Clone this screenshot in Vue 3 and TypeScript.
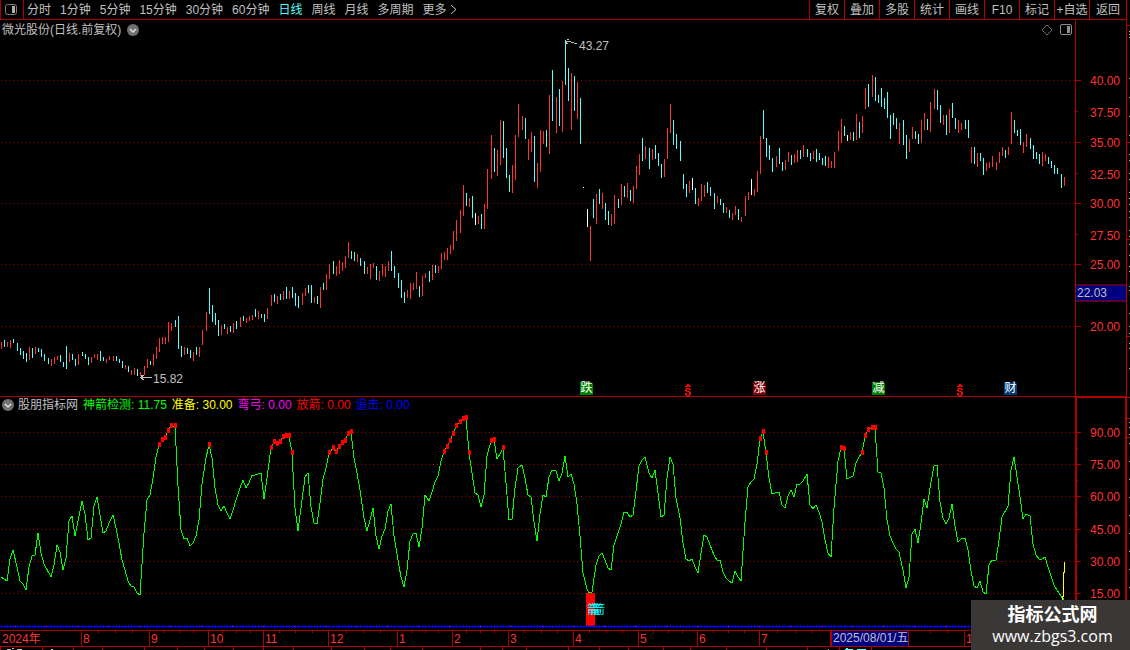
<script setup lang="ts">
type Candle = { x: number; top: number; bottom: number; kind: string }
type Point = { x: number; y: number }

const periods = ['分时', '1分钟', '5分钟', '15分钟', '30分钟', '60分钟', '日线', '周线', '月线', '多周期', '更多']
const tools = ['复权', '叠加', '多股', '统计', '画线', 'F10', '标记', '+自选', '返回']

// x top bottom kind: r = rising, c = falling, w = unchanged
const candleData = `
1 342 349 r;4 340 347 c;7 342 347 r;10 340 348 r;13 339 343 c;17 343 351 c;20 348 355 c;23 351 359 c;26 353 362 c;29 347 360 r;
32 348 358 c;35 347 354 r;38 348 352 c;41 349 357 c;44 354 361 c;48 358 364 c;51 359 366 r;54 357 364 r;57 356 360 r;60 355 362 c;
63 362 367 c;66 346 369 c;69 353 362 r;72 354 360 c;75 359 366 c;78 354 365 r;82 352 356 c;85 354 359 c;88 357 365 c;91 357 363 r;
94 354 358 r;97 354 360 r;100 351 361 c;103 357 361 c;106 359 363 r;109 356 360 r;113 356 361 r;116 356 361 c;119 359 363 c;122 361 368 c;
125 365 369 r;128 366 372 c;131 370 375 r;134 368 375 r;137 369 376 c;140 372 376 r;144 366 375 r;147 359 368 r;150 361 365 c;153 354 366 r;
156 347 359 r;159 338 352 r;162 337 344 r;165 337 344 r;168 322 342 r;171 323 331 r;175 320 327 c;178 316 349 c;181 346 357 c;184 347 355 r;
187 348 354 c;190 350 358 c;193 352 361 r;196 347 355 c;199 347 357 r;202 330 345 r;206 312 331 r;209 288 314 c;212 305 322 c;215 313 325 c;
218 320 336 c;221 325 335 r;224 324 329 c;227 327 334 r;230 326 332 c;233 323 333 r;236 321 329 c;240 317 327 r;243 316 321 c;246 318 323 r;
249 316 321 r;252 315 320 r;255 309 317 c;258 311 319 r;261 314 318 c;264 314 322 c;267 308 319 r;271 295 306 r;274 294 302 c;277 296 304 r;
280 294 300 c;283 291 300 r;286 287 299 c;289 291 299 r;292 287 298 c;295 293 306 c;298 296 308 c;302 293 305 r;305 288 296 r;308 285 293 c;
311 285 303 c;314 297 303 r;317 296 304 c;320 287 308 r;323 283 290 c;326 274 290 r;329 264 279 r;333 261 274 c;336 266 276 r;339 260 274 r;
342 262 271 r;345 256 268 r;348 242 258 r;351 251 259 c;354 252 261 c;357 254 262 r;360 258 266 c;364 261 274 c;367 267 274 r;370 264 279 r;
373 263 268 r;376 266 280 c;379 271 281 r;382 264 276 r;385 266 277 r;388 261 271 r;391 251 271 c;394 266 278 c;398 273 288 c;401 280 298 c;
404 292 303 c;407 290 298 r;410 283 299 r;413 283 290 r;416 272 289 r;419 286 297 c;422 276 296 r;425 273 278 r;429 271 282 c;432 265 280 r;
435 265 273 c;438 266 273 r;441 253 269 r;444 252 260 r;447 248 260 r;450 245 254 r;453 231 250 r;456 220 241 r;460 210 233 r;463 185 216 r;
466 193 206 c;469 198 207 r;472 196 218 c;475 213 225 w;478 216 224 r;481 214 229 c;484 204 229 r;487 169 209 r;491 135 179 r;494 148 172 c;
497 150 176 r;500 120 165 r;503 121 158 c;506 148 178 c;509 175 192 c;512 165 193 r;515 135 180 r;518 104 137 r;522 116 130 r;525 118 139 c;
528 139 160 r;531 132 152 r;534 136 182 c;537 163 188 r;540 130 172 r;543 131 144 r;546 130 147 c;549 95 154 r;552 70 121 c;556 97 133 r;
559 89 126 c;562 81 132 r;565 40 85 c;568 68 101 c;571 73 130 r;574 76 111 c;577 82 119 r;580 98 144 c;583 187 188 w;587 209 227 w;
590 226 261 r;593 199 218 c;596 194 224 r;599 189 204 c;602 193 209 r;605 203 220 c;608 211 225 c;611 214 226 r;614 195 224 r;618 199 208 c;
621 184 205 r;624 186 197 c;627 183 198 r;630 190 201 c;633 186 203 r;636 166 189 r;639 154 175 r;642 138 161 c;645 146 159 r;649 148 169 c;
652 149 160 r;655 145 159 c;658 153 166 c;661 164 178 c;664 159 177 r;667 128 159 r;670 104 133 r;673 120 145 c;676 134 149 c;680 141 161 c;
683 174 189 c;686 184 197 c;689 181 193 r;692 178 190 w;695 188 204 c;698 198 206 r;701 184 201 r;704 185 197 r;707 182 193 c;710 187 196 c;
714 193 209 c;717 196 203 r;720 199 205 c;723 203 213 c;726 207 213 r;729 210 218 c;732 213 220 r;735 206 215 r;738 209 220 c;741 217 222 r;
745 196 216 r;748 192 200 r;751 179 195 w;754 189 196 r;757 171 192 r;760 136 174 r;763 110 139 c;766 138 157 c;769 145 160 c;772 158 172 c;
776 156 167 r;779 148 164 c;782 162 171 c;785 160 170 r;788 152 162 r;791 155 165 c;794 154 163 r;797 150 162 r;800 150 159 c;803 145 157 r;
807 149 157 c;810 153 161 c;813 151 159 r;816 149 162 c;819 153 160 c;822 158 165 c;825 156 166 c;828 157 168 r;831 161 168 r;834 152 168 r;
838 131 151 r;841 119 143 r;844 126 136 c;847 135 141 w;850 132 140 r;853 132 141 c;856 114 140 r;859 122 138 c;862 116 133 r;865 88 109 r;
868 84 107 c;872 75 97 r;875 77 101 c;878 95 103 c;881 88 107 c;884 98 109 c;887 92 118 c;890 115 139 c;893 113 125 c;896 118 129 c;
899 123 144 r;903 120 145 c;906 135 159 c;909 139 152 r;912 127 139 r;915 131 139 c;918 134 144 c;921 120 143 r;924 113 130 r;927 119 130 c;
930 102 132 r;934 89 109 r;937 90 110 c;940 105 123 c;943 115 125 r;946 115 135 c;949 109 133 r;952 103 118 c;955 118 129 c;958 120 133 r;
961 123 130 r;965 120 129 c;968 120 138 c;971 147 163 r;974 147 164 c;977 153 167 r;980 153 161 c;983 158 175 c;986 163 171 r;989 162 168 r;
992 156 167 r;996 162 170 r;999 152 163 r;1002 147 156 r;1005 150 158 c;1008 147 155 r;1011 112 144 r;1014 120 133 c;1017 130 136 c;1020 129 145 c;
1023 142 153 r;1026 134 147 r;1030 138 149 c;1033 145 159 c;1036 152 159 c;1039 154 164 c;1042 152 166 r;1045 154 161 r;1048 157 164 c;1051 161 168 c;
1054 165 174 c;1057 168 174 c;1061 174 188 c;1064 177 186 r`

const candles: Candle[] = candleData.trim().split(';').map((row) => {
  const [x, top, bottom, kind] = row.trim().split(' ')
  return { x: Number(x), top: Number(top), bottom: Number(bottom), kind }
})

const signalData = `
1,577 7,581 10,559 13,550 17,567 20,581 23,584 26,590 29,567 32,556 35,555 38,533 41,553 44,564 51,577 54,565 57,545 60,552 63,570 66,558
69,521 72,516 75,536 78,521 82,501 85,514 88,540 91,538 94,506 97,497 100,515 103,533 106,531 109,523 113,515 116,528 119,543 122,560 125,570 128,581
131,586 134,587 137,593 140,595 144,533 147,500 150,495 153,478 156,457 159,445 162,440 165,438 168,431 171,426 175,426 178,486 181,530 184,539 187,538 190,546
193,543 196,536 199,520 202,484 206,458 209,445 212,458 215,488 218,505 221,511 224,506 227,513 230,519 233,510 236,500 240,488 243,480 246,488 249,483 252,475
255,475 261,473 264,499 267,478 271,448 274,442 277,444 280,442 283,437 286,436 289,436 292,453 295,508 298,531 302,500 305,477 308,473 311,507 314,523 317,524
320,503 323,479 326,468 329,453 333,448 336,452 339,447 342,443 345,441 348,434 351,432 354,458 357,473 360,490 364,518 367,531 370,520 373,508 376,536 379,549
382,536 385,529 388,511 391,504 394,536 398,560 401,577 404,587 407,570 410,541 413,534 416,533 419,547 422,528 425,495 429,501 432,492 435,482 438,476 441,461
444,452 447,447 450,441 453,434 456,426 460,422 463,419 466,418 469,453 472,473 475,493 478,495 481,507 484,495 487,456 491,441 494,440 497,459 500,454 503,448
506,483 509,520 512,519 515,488 518,468 522,465 525,478 528,495 531,497 534,522 537,541 540,514 543,495 546,497 549,477 552,470 556,471 559,481 562,473 565,456
568,477 571,474 574,484 577,504 580,536 583,573 587,589 589,593 592,592 593,585 596,565 599,556 602,553 605,560 608,568 611,570 614,545 618,533 621,524 624,512
627,512 630,517 633,515 636,491 639,466 642,460 645,457 649,473 652,478 655,470 658,493 661,517 664,515 667,478 670,457 673,464 676,498 680,518 683,543 686,559
689,561 692,559 695,567 698,573 701,553 704,535 707,537 710,545 714,555 717,560 720,560 723,572 726,578 729,581 732,583 735,571 738,577 741,581 745,522 748,487
751,482 754,479 757,464 760,439 763,432 766,453 769,478 772,494 775,493 779,492 782,505 785,508 788,496 791,490 794,497 797,484 800,484 803,481 807,474 810,505
813,509 816,505 819,512 822,522 825,540 828,553 831,557 834,508 838,461 841,448 844,449 847,479 853,476 856,463 859,457 862,453 865,436 868,430 872,428 875,428
878,472 881,473 884,488 887,520 890,536 893,543 896,549 899,552 903,570 906,588 909,577 912,534 915,529 918,543 921,523 924,499 927,508 930,488 934,466 937,465
940,502 943,518 946,524 949,518 952,504 955,526 958,542 961,539 965,538 968,550 971,571 974,586 977,588 980,581 983,592 986,594 989,565 992,560 996,560 999,540
1002,517 1008,506 1011,470 1014,457 1017,477 1020,497 1023,519 1026,514 1030,516 1033,544 1036,555 1039,559 1042,559 1045,557 1048,567 1051,576 1054,585 1057,590 1061,596 1064,600`

const signal: Point[] = signalData.trim().split(/\s+/).map((pair) => {
  const [x, y] = pair.split(',').map(Number)
  return { x, y }
})
const signalPath = signal.map((p) => `${p.x},${p.y}`).join(' ')
const hotFloor = 453
const marks = signal.filter((p) => p.y <= hotFloor)

const priceGrid = [80, 142, 203, 264, 326]
const priceMinor = [111, 173, 234]
const priceLabels = [
  { y: 81, text: '40.00' }, { y: 113, text: '37.50' }, { y: 143, text: '35.00' }, { y: 175, text: '32.50' },
  { y: 204, text: '30.00' }, { y: 236, text: '27.50' }, { y: 265, text: '25.00' }, { y: 327, text: '20.00' },
]
const signalGrid = [432, 464, 496, 529, 561, 593]
const signalMinor = [448, 480, 513, 545, 577]
const signalLabels = ['90.00', '75.00', '60.00', '45.00', '30.00', '15.00']

const legend = [
  { name: '神箭检测', value: '11.75', tone: 'green' },
  { name: '准备', value: '30.00', tone: 'yellow' },
  { name: '弯弓', value: '0.00', tone: 'magenta' },
  { name: '放箭', value: '0.00', tone: 'red' },
  { name: '追击', value: '0.00', tone: 'blue' },
]

const events = [
  { x: 580, text: '跌', tone: 'fall' },
  { x: 753, text: '涨', tone: 'rise' },
  { x: 872, text: '减', tone: 'fall' },
  { x: 1004, text: '财', tone: 'report' },
]
const dividends = [684, 956]

const months = [
  { x: 81, text: '8' }, { x: 149, text: '9' }, { x: 208, text: '10' }, { x: 263, text: '11' }, { x: 328, text: '12' },
  { x: 397, text: '1' }, { x: 452, text: '2' }, { x: 508, text: '3' }, { x: 573, text: '4' }, { x: 638, text: '5' },
  { x: 697, text: '6' }, { x: 759, text: '7' }, { x: 964, text: '10' },
]
const weekTicks = [98, 115, 132, 164, 179, 193, 222, 236, 250, 279, 295, 312, 346, 363, 380, 411, 425, 438, 466, 480, 494, 524, 541, 557, 589, 606, 622, 653, 668, 682, 713, 728, 744, 777, 795, 812, 930, 947]
const lowerTicks = [0, 42, 73, 102, 144, 177, 204, 233, 263, 293, 331, 364, 390, 422, 480, 502, 526, 568, 599, 628, 663, 690, 726, 766, 807, 839, 871]
const sideRed = [25, 142, 239, 336, 397, 418, 437]
const sideWhite = [31, 34, 37, 78, 97, 116, 135, 154, 160, 173, 179, 192, 198, 204, 211, 217, 230, 236, 244, 255, 266, 271, 286, 290, 313, 326, 333, 343, 348, 368, 422, 427, 434, 443, 461, 479, 497, 515, 533, 551, 569, 587]

const leftOf = (x: number, span = 1075) => ({ left: `${(x / span) * 100}%` })
const topOf = (y: number, start: number, span: number) => ({ top: `${((y - start) / span) * 100}%` })
const isAccent = (i: number) => i % 10 === 4
</script>

<template>
  <div class="terminal">
    <main class="workspace">
      <header class="toolbar">
        <button class="layout-toggle" type="button" aria-label="布局">
          <svg width="14" height="12" viewBox="0 0 14 12"><rect x="1.5" y="0.5" width="11" height="10" rx="2" fill="none" stroke="#808080" /><path d="M8 2h3v7H8z" fill="#b0b0b0" /></svg>
        </button>
        <nav class="periods" aria-label="周期">
          <button v-for="p in periods" :key="p" type="button" :class="{ active: p === '日线' }">{{ p }}</button>
          <svg class="more" width="7" height="11" viewBox="0 0 7 11"><path d="M1 1l5 4.500-5 4.500" fill="none" stroke="#c0c0c0" /></svg>
        </nav>
        <div class="tools">
          <button v-for="t in tools" :key="t" type="button">{{ t }}</button>
        </div>
      </header>

      <section class="panel price" aria-label="日线">
        <div class="plot">
          <svg class="canvas" viewBox="0 20 1075 376" preserveAspectRatio="none" shape-rendering="crispEdges">
            <g class="grid">
              <path v-for="y in priceGrid" :key="y" :d="`M1 ${y}.500H1075`" />
            </g>
            <rect v-for="c in candles" :key="c.x" :class="c.kind" :x="c.x" :y="c.top" width="1" :height="c.bottom - c.top" />
            <g class="pointer">
              <path d="M565 41.500h4M566 42.500h1M567 39.500h2M568 41.500h3M571 42.500h3M574 43.500h3M566 43.500h2" />
              <path d="M140 377.500h12M141 375.500h3M141 376.500h2M141 378.500h2M142 379.500h2" />
            </g>
          </svg>
          <div class="title">
            <span>微光股份(日线.前复权)</span>
            <button class="fold" type="button" aria-label="展开">
              <svg width="12" height="12" viewBox="0 0 12 12"><circle cx="6" cy="6" r="6" fill="#707070" /><path d="M3 5l3 3 3-3" fill="none" stroke="#e0e0e0" stroke-width="1.500" /></svg>
            </button>
            <span class="title-icons">
              <svg width="12" height="12" viewBox="0 0 12 12"><path d="M6 1l5 5-5 5-5-5z" fill="none" stroke="#707070" /></svg>
              <svg width="12" height="12" viewBox="0 0 12 12"><rect x="0.500" y="0.500" width="11" height="10" rx="1.500" fill="none" stroke="#909090" /><path d="M7 2h3v7H7z" fill="#909090" /></svg>
            </span>
          </div>
          <span class="extreme" :style="{ ...leftOf(579), ...topOf(46, 20, 376) }">43.27</span>
          <span class="extreme" :style="{ ...leftOf(153), ...topOf(379, 20, 376) }">15.82</span>
          <span v-for="e in events" :key="e.x" class="event" :class="e.tone" :style="leftOf(e.x)">{{ e.text }}</span>
          <span v-for="x in dividends" :key="x" class="dividend" :style="leftOf(x)">
            <svg width="8" height="12" viewBox="0 0 8 12" shape-rendering="crispEdges"><path d="M3 0h2v1h1v1h1v1H1V2h1V1h1zM2 4h4v1h1v1H5V5H3v2h3v1h1v3H6v1H2v-1H1V9h2v2h2V8H2V7H1V5h1z" fill="#ff0000" /></svg>
          </span>
        </div>
        <div class="axis">
          <svg class="ticks" viewBox="0 20 50 376" preserveAspectRatio="none" shape-rendering="crispEdges">
            <path v-for="y in priceGrid" :key="y" :d="`M0 ${y}.500h5`" />
            <path v-for="y in priceMinor" :key="y" :d="`M0 ${y}.500h2`" />
          </svg>
          <span v-for="l in priceLabels" :key="l.text" class="label" :style="topOf(l.y, 20, 376)">{{ l.text }}</span>
          <span class="cursor-price" :style="topOf(293, 20, 376)">22.03</span>
        </div>
      </section>

      <section class="panel indicator" aria-label="股朋指标网">
        <div class="plot">
          <svg class="canvas" viewBox="0 397 1075 233" preserveAspectRatio="none" shape-rendering="crispEdges">
            <g class="grid">
              <path v-for="y in signalGrid" :key="y" :d="`M1 ${y}.500H1075`" />
            </g>
            <polyline class="signal" :points="signalPath" />
            <path class="ready" d="M1064 562v10h-1v24h-1v4" />
            <rect v-for="m in marks" :key="m.x" class="mark" :x="m.x - 1" :y="m.y - 3" width="3" height="5" />
            <rect class="mark" x="586" y="593" width="9" height="33" />
            <path class="base" d="M1 626.500H1075" />
            <template v-for="(c, i) in candles" :key="c.x">
              <rect class="dot" :x="c.x" y="625" width="1" height="3" />
              <rect v-if="isAccent(i)" class="accent" :x="c.x + 2" y="626" width="1" height="1" />
            </template>
          </svg>
          <div class="legend">
            <button class="fold" type="button" aria-label="展开">
              <svg width="12" height="12" viewBox="0 0 12 12"><circle cx="6" cy="6" r="6" fill="#707070" /><path d="M3 5l3 3 3-3" fill="none" stroke="#e0e0e0" stroke-width="1.500" /></svg>
            </button>
            <span class="name">股朋指标网</span>
            <span v-for="l in legend" :key="l.name" :class="l.tone">{{ l.name }}: {{ l.value }}</span>
          </div>
          <span class="arrow" :style="{ ...leftOf(587), ...topOf(610, 397, 233) }">箭</span>
        </div>
        <div class="axis">
          <svg class="ticks" viewBox="0 398 48 232" preserveAspectRatio="none" shape-rendering="crispEdges">
            <path v-for="y in signalGrid" :key="y" :d="`M0 ${y}.500h4`" />
            <path v-for="y in signalMinor" :key="y" :d="`M0 ${y}.500h1`" />
          </svg>
          <span v-for="(l, i) in signalLabels" :key="l" class="label" :style="topOf(signalGrid[i] + 1, 398, 232)">{{ l }}</span>
        </div>
      </section>

      <footer class="timeline">
        <svg class="canvas" viewBox="0 630 1126 20" preserveAspectRatio="none" shape-rendering="crispEdges">
          <g class="rule">
            <path d="M0 630.500H1126M0 646.500H1126" />
            <path v-for="m in months" :key="m.x" :d="`M${m.x}.500 630v16`" />
            <path v-for="x in weekTicks" :key="x" :d="`M${x}.500 631v2`" />
            <path v-for="x in lowerTicks" :key="x" :d="`M${x}.500 647v3`" />
          </g>
          <path class="stub" d="M7 649.500h4M12 648.500h2M17 649.500h5M51 649.500h2M828 649.500h1" />
          <path class="stub cyan" d="M845 649.500h8M846 648.500h2M857 649.500h9" />
        </svg>
        <span class="month" :style="leftOf(1, 1126)">2024年</span>
        <span v-for="m in months" :key="m.x" class="month" :style="leftOf(m.x + 1, 1126)">{{ m.text }}</span>
        <span class="cursor-date" :style="leftOf(830, 1126)">2025/08/01/五</span>
      </footer>
    </main>

    <aside class="side">
      <svg class="canvas" viewBox="0 0 3 650" preserveAspectRatio="none" shape-rendering="crispEdges">
        <path v-for="y in sideRed" :key="y" :d="`M0 ${y}.500h3`" stroke="#b00000" />
        <path v-for="y in sideWhite" :key="y" :d="`M2 ${y}.500h1`" stroke="#c0c0c0" />
      </svg>
    </aside>

    <a class="brand" href="#">
      <strong>指标公式网</strong>
      <span>www.zbgs3.com</span>
    </a>
  </div>
</template>

<style>
body {
  margin: 0;
  background: #000;
}
</style>

<style scoped>
.terminal {
  position: relative;
  display: grid;
  grid-template-columns: minmax(0, 1fr) 4px;
  height: 100vh;
  overflow: hidden;
  background: #000;
  color: #c0c0c0;
  font: 12px/16px "Liberation Sans", "Noto Sans CJK SC", sans-serif;
  white-space: nowrap;
}

.workspace {
  display: grid;
  grid-template-rows: 20px minmax(0, 377fr) minmax(0, 233fr) 20px;
  min-height: 0;
}

button {
  padding: 0;
  border: 0;
  background: none;
  color: inherit;
  font: inherit;
  cursor: pointer;
}

svg {
  display: block;
}

.toolbar {
  box-sizing: border-box;
  display: flex;
  border-bottom: 1px solid #b00000;
}

.layout-toggle {
  box-sizing: border-box;
  width: 24px;
  padding-left: 3px;
  border: solid #b00000;
  border-width: 0 1px;
}

.periods {
  display: flex;
  flex: 1;
  gap: 9px;
  align-items: center;
  padding-left: 3px;
}

.periods .active {
  color: #54ffff;
}

.more {
  margin-left: -6px;
}

.tools {
  display: flex;
}

.tools button {
  box-sizing: border-box;
  width: 35px;
  border-left: 1px solid #b00000;
}

.tools button:last-child {
  width: 37px;
}

.panel {
  display: grid;
  grid-template-columns: minmax(0, 1fr) 51px;
  min-height: 0;
}

.price {
  border-bottom: 1px solid #b00000;
}

.plot,
.axis,
.timeline,
.side {
  position: relative;
  min-height: 0;
}

.canvas,
.ticks {
  position: absolute;
  inset: 0;
  width: 100%;
  height: 100%;
}

.axis {
  border-left: 1px solid #b00000;
}

.indicator .axis {
  border-top: 1px solid #b00000;
  border-right: 1px solid #b00000;
  border-left-width: 2px;
}

.ticks path,
.rule path {
  stroke: #b00000;
}

.label {
  position: absolute;
  right: 6px;
  color: #ff3232;
  transform: translateY(-50%);
}

.indicator .label {
  right: 5px;
}

.cursor-price {
  position: absolute;
  right: 0;
  left: 0;
  padding-left: 1px;
  border: solid #b00000;
  border-width: 1px 0;
  background: #000080;
  line-height: 15px;
  transform: translateY(-50%);
}

.grid path {
  stroke: #a00000;
  stroke-dasharray: 1 3;
}

.r {
  fill: #ff3232;
}

.c {
  fill: #54ffff;
}

.w {
  fill: #fff;
}

.pointer path {
  stroke: #c0c0c0;
}

.title,
.legend {
  position: relative;
  display: flex;
  align-items: center;
}

.title {
  gap: 6px;
  padding: 2px 3px 0 2px;
}

.title-icons {
  display: flex;
  gap: 7px;
  margin-left: auto;
}

.legend {
  gap: 5px;
  padding-left: 2px;
}

.legend .name {
  margin-left: -1px;
}

.green {
  color: #00ff00;
}

.yellow {
  color: #ffff00;
}

.magenta {
  color: #ff00ff;
}

.red {
  color: #ff0000;
}

.blue {
  color: #0000ff;
}

.extreme,
.arrow {
  position: absolute;
  transform: translateY(-50%);
}

.arrow {
  color: #00ffff;
  text-shadow: 3px 0 #00ffff, 6px 0 #00ffff;
}

.event {
  position: absolute;
  bottom: 1px;
  width: 13px;
  height: 13px;
  border-top-right-radius: 3px;
  color: #fff;
  line-height: 13px;
  text-align: center;
}

.fall {
  background: #008000;
}

.rise {
  background: #800000;
}

.report {
  background: #003c78;
}

.dividend {
  position: absolute;
  bottom: 0;
}

.signal,
.ready {
  fill: none;
  stroke: #00ff00;
}

.ready {
  stroke: #ffff00;
}

.mark {
  fill: #ff0000;
}

.base {
  stroke: #0000ff;
}

.dot {
  fill: #0000ff;
}

.accent {
  fill: #ff00ff;
}

.month {
  position: absolute;
  top: 1px;
  padding-left: 1px;
  color: #ff3232;
}

.cursor-date {
  position: absolute;
  top: 0;
  padding-left: 1px;
  border: solid #b00000;
  border-width: 1px 1px 1px 2px;
  background: #000080;
  line-height: 15px;
}

.stub {
  stroke: #c0c0c0;
}

.stub.cyan {
  stroke: #54ffff;
}

.side {
  border-left: 1px solid #b00000;
}

.brand {
  position: absolute;
  right: 0;
  bottom: 0;
  box-sizing: border-box;
  display: flex;
  flex-direction: column;
  align-items: center;
  width: 159px;
  height: 50px;
  padding: 5px 0 3px 4px;
  background: #3a3737;
  color: #fff;
  text-decoration: none;
}

.brand strong {
  font-size: 18px;
  line-height: 21px;
}

.brand span {
  font: 16px/20px "Open Sans", sans-serif;
}
</style>
